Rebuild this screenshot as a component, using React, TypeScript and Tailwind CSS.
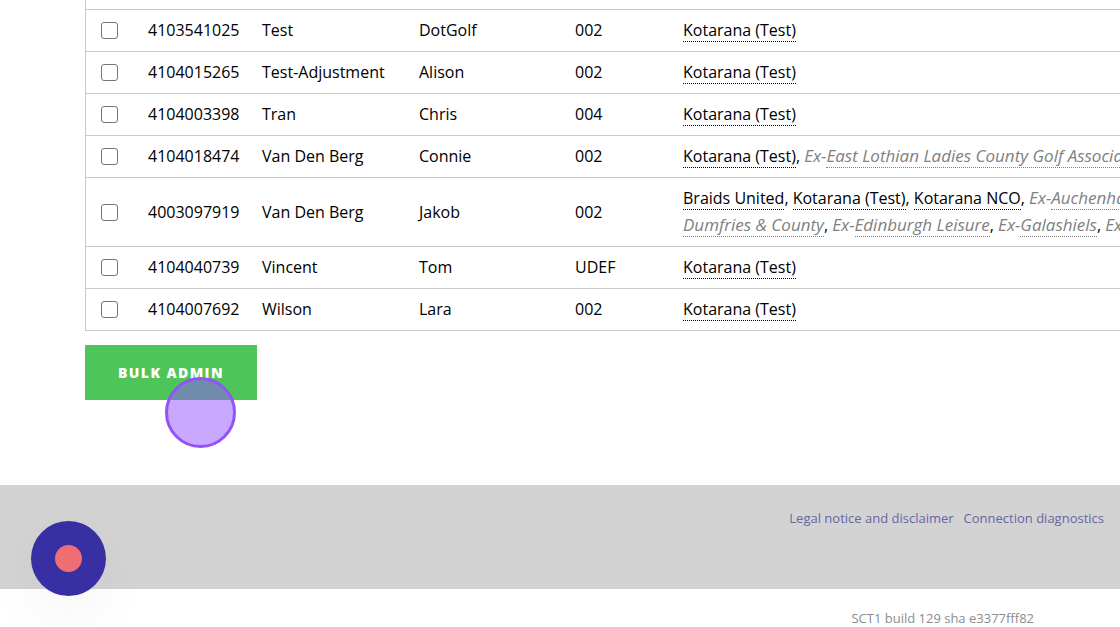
import { Fragment, useState } from 'react';

type Club = { name: string; ex?: boolean; prefix?: boolean; breakBefore?: boolean };

type Member = {
  id: string;
  surname: string;
  firstName: string;
  code: string;
  clubs: Club[];
};

const kotarana: Club = { name: 'Kotarana (Test)' };

const members: Member[] = [
  { id: '4103541025', surname: 'Test', firstName: 'DotGolf', code: '002', clubs: [kotarana] },
  { id: '4104015265', surname: 'Test-Adjustment', firstName: 'Alison', code: '002', clubs: [kotarana] },
  { id: '4104003398', surname: 'Tran', firstName: 'Chris', code: '004', clubs: [kotarana] },
  {
    id: '4104018474',
    surname: 'Van Den Berg',
    firstName: 'Connie',
    code: '002',
    clubs: [kotarana, { name: 'East Lothian Ladies County Golf Association', ex: true, prefix: true }],
  },
  {
    id: '4003097919',
    surname: 'Van Den Berg',
    firstName: 'Jakob',
    code: '002',
    clubs: [
      { name: 'Braids United' },
      kotarana,
      { name: 'Kotarana NCO' },
      { name: 'Auchenharvie', ex: true, prefix: true },
      { name: 'Dumfries & County', ex: true, breakBefore: true },
      { name: 'Edinburgh Leisure', ex: true, prefix: true },
      { name: 'Galashiels', ex: true, prefix: true },
      { name: 'Elie', ex: true, prefix: true },
    ],
  },
  { id: '4104040739', surname: 'Vincent', firstName: 'Tom', code: 'UDEF', clubs: [kotarana] },
  { id: '4104007692', surname: 'Wilson', firstName: 'Lara', code: '002', clubs: [kotarana] },
];

export default function App() {
  const [selected, setSelected] = useState<string[]>([]);

  const toggle = (id: string) => {
    setSelected((prev) =>
      prev.includes(id) ? prev.filter((item) => item !== id) : [...prev, id]
    );
  };

  return (
    <div className="relative w-full overflow-hidden bg-white font-['Open_Sans',sans-serif] text-base text-black">

      {/* MEMBERS */}
      <main className="pl-[85px] pb-[85px]">
        <div className="h-[9px] border-l border-[#c8c8c8]" />

        <table className="w-full table-fixed border-separate border-spacing-0 border-b border-l border-[#c8c8c8]">
          <colgroup>
            <col className="w-[62px]" />
            <col className="w-[114px]" />
            <col className="w-[157px]" />
            <col className="w-[156px]" />
            <col className="w-[108px]" />
            <col />
          </colgroup>
          <tbody>
            {members.map((member) => (
              <MemberRow
                key={member.id}
                member={member}
                checked={selected.includes(member.id)}
                onToggle={() => toggle(member.id)}
              />
            ))}
          </tbody>
        </table>

        <div className="relative mt-[14px] inline-block align-top">
          <button
            type="button"
            className="h-[55px] bg-[#4dc558] px-[33px] text-sm font-extrabold tracking-widest text-white"
          >
            BULK ADMIN
          </button>
          <ClickMarker />
        </div>
      </main>

      {/* FOOTER */}
      <footer>
        <div className="flex h-[104px] justify-end gap-[10px] bg-[#d3d3d3] px-4 pt-6 text-[13px] leading-[18px] text-[#6666a3]">
          <a href="#legal" className="whitespace-nowrap">Legal notice and disclaimer</a>
          <a href="#diagnostics" className="whitespace-nowrap">Connection diagnostics</a>
        </div>
        <p className="pt-5 pr-[86px] text-right text-[13px] leading-[18px] text-[#8c8c8c]">
          SCT1 build 129 sha e3377fff82
        </p>
      </footer>

      <RecordButton />
    </div>
  );
}

/* ================= MEMBER ROW ================= */

function MemberRow({
  member,
  checked,
  onToggle,
}: {
  member: Member;
  checked: boolean;
  onToggle: () => void;
}) {
  return (
    <tr className="leading-[27px] [&>td]:border-t [&>td]:border-[#c8c8c8] [&>td]:py-[7px] [&>td]:whitespace-nowrap">
      <td className="pl-[15px]">
        <input
          type="checkbox"
          aria-label={`Select ${member.firstName} ${member.surname}`}
          checked={checked}
          onChange={onToggle}
          className="block size-[17px] appearance-none rounded-[3px] border border-[#767676] bg-white checked:bg-[#3730a3]"
        />
      </td>
      <td>{member.id}</td>
      <td>{member.surname}</td>
      <td>{member.firstName}</td>
      <td>{member.code}</td>
      <td>
        {member.clubs.map((club, i) => (
          <Fragment key={club.name}>
            {i > 0 && ', '}
            {club.breakBefore && <br />}
            <ClubName club={club} />
          </Fragment>
        ))}
      </td>
    </tr>
  );
}

function ClubName({ club }: { club: Club }) {
  if (!club.ex) {
    return <span className="border-b border-dotted border-black">{club.name}</span>;
  }

  return (
    <em className="text-[17px] leading-none text-[#808080]">
      {club.prefix && 'Ex-'}
      <span className="border-b border-dotted border-[#808080]">{club.name}</span>
    </em>
  );
}

/* ================= OVERLAYS ================= */

function ClickMarker() {
  return (
    <span className="pointer-events-none absolute top-8 left-20 size-[71px] rounded-full border-3 border-[#9452fb] bg-[#9452ff]/50" />
  );
}

function RecordButton() {
  return (
    <button
      type="button"
      aria-label="Stop recording"
      className="absolute bottom-[31px] left-[31px] flex size-[75px] items-center justify-center rounded-full bg-[#372fa2] shadow-[0_16px_60px_rgba(0,0,0,0.05)]"
    >
      <span className="size-[27px] rounded-full bg-[#ef6e73]" />
    </button>
  );
}
